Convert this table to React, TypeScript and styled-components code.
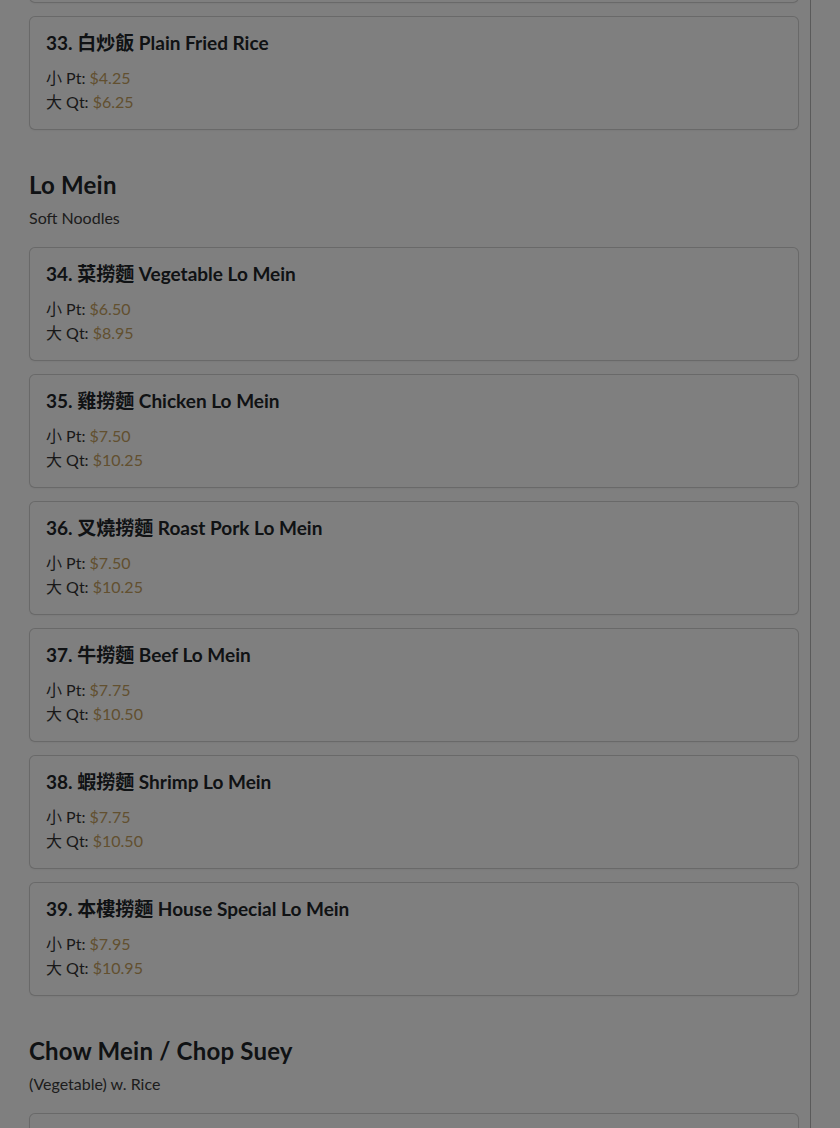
import { FC, useLayoutEffect, useRef } from 'react';
import { createGlobalStyle, styled } from 'styled-components';

const GlobalStyle = createGlobalStyle`
    html, body {
        margin: 0;
        padding: 0;
        background: #fff;
    }
    body {
        font-family: Lato, "Noto Sans", "Noto Sans CJK TC", sans-serif;
        color: #212529;
    }
`;

type Item = { no: number; zh: string; en: string; pt: string; qt: string };
type Section = { title?: string; note?: string; items: Item[] };

const sections: Section[] = [
    {
        items: [
            { no: 32, zh: '蝦炒飯', en: 'Shrimp Fried Rice', pt: '7.25', qt: '9.95' },
            { no: 33, zh: '白炒飯', en: 'Plain Fried Rice', pt: '4.25', qt: '6.25' },
        ],
    },
    {
        title: 'Lo Mein',
        note: 'Soft Noodles',
        items: [
            { no: 34, zh: '菜撈麵', en: 'Vegetable Lo Mein', pt: '6.50', qt: '8.95' },
            { no: 35, zh: '雞撈麵', en: 'Chicken Lo Mein', pt: '7.50', qt: '10.25' },
            { no: 36, zh: '叉燒撈麵', en: 'Roast Pork Lo Mein', pt: '7.50', qt: '10.25' },
            { no: 37, zh: '牛撈麵', en: 'Beef Lo Mein', pt: '7.75', qt: '10.50' },
            { no: 38, zh: '蝦撈麵', en: 'Shrimp Lo Mein', pt: '7.75', qt: '10.50' },
            { no: 39, zh: '本樓撈麵', en: 'House Special Lo Mein', pt: '7.95', qt: '10.95' },
        ],
    },
    {
        title: 'Chow Mein / Chop Suey',
        note: '(Vegetable) w. Rice',
        items: [
            { no: 40, zh: '菜炒麵', en: 'Vegetable Chow Mein', pt: '6.50', qt: '8.95' },
        ],
    },
];

// the list is scrolled part way down, like the captured page
const Viewport = styled.div`
    height: 100vh;
    overflow: hidden;
`;

const Main = styled.main`
    width: 811px;
    border-right: 1px solid #b4b4b4;
    box-sizing: border-box;
    padding: 0 11px 0 29px;
    min-height: 100%;
`;

const Group = styled.section`
    & + & {
        margin-top: 41px;
    }
`;

const GroupTitle = styled.h2`
    margin: 0 0 6px;
    font-size: 24px;
    line-height: 1.2;
    font-weight: 700;
    letter-spacing: 0.2px;
`;

const GroupNote = styled.p`
    margin: 0 0 17px;
    font-size: 16px;
    line-height: 1.5;
    color: #3a3a3a;
`;

const Card = styled.div`
    background: #fff;
    border: 1px solid rgba(0, 0, 0, 0.175);
    border-radius: 6px;
    padding: 16px 16px 15px;
    margin-bottom: 13px;
    box-shadow: 0 1px 2px rgba(0, 0, 0, 0.05);
`;

const ItemTitle = styled.h3`
    margin: 0 0 13px;
    font-size: 19px;
    line-height: 20px;
    font-weight: 700;
`;

const Zh = styled.span`
    line-height: 1;
`;

const PriceRow = styled.div`
    font-size: 16px;
    line-height: 24px;
    color: #333;
`;

const Price = styled.span`
    color: #c4a060;
`;

const Backdrop = styled.div`
    position: fixed;
    inset: 0;
    background: rgba(0, 0, 0, 0.5);
`;

const MenuCard: FC<{ item: Item }> = ({ item }) => (
    <Card>
        <ItemTitle>
            {item.no}. <Zh>{item.zh}</Zh> {item.en}
        </ItemTitle>
        <PriceRow>
            <Zh>小</Zh> Pt: <Price>${item.pt}</Price>
        </PriceRow>
        <PriceRow>
            <Zh>大</Zh> Qt: <Price>${item.qt}</Price>
        </PriceRow>
    </Card>
);

const App: FC = () => {
    const ref = useRef<HTMLDivElement>(null);

    useLayoutEffect(() => {
        if (ref.current) ref.current.scrollTop = 111;
    }, []);

    return (
        <>
            <GlobalStyle />
            <Viewport ref={ref}>
                <Main>
                    {sections.map((s, i) => (
                        <Group key={i}>
                            {s.title && <GroupTitle>{s.title}</GroupTitle>}
                            {s.note && <GroupNote>{s.note}</GroupNote>}
                            {s.items.map((it) => (
                                <MenuCard key={it.no} item={it} />
                            ))}
                        </Group>
                    ))}
                </Main>
            </Viewport>
            <Backdrop />
        </>
    );
};

export default App;
